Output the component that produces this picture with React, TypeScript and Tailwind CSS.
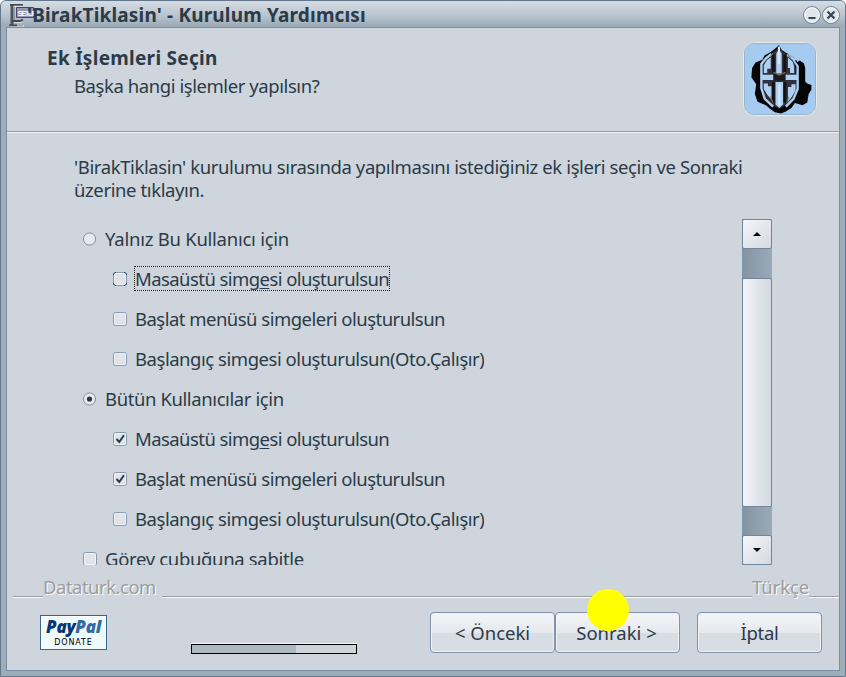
import type { ReactNode } from "react";

function AppIcon() {
  return (
    <svg width="26" height="24" viewBox="0 0 26 24" className="shrink-0" aria-hidden="true">
      <path d="M1.5 1h2.8v20H1.5z" fill="#50545c" />
      <path d="M4.3 3h1.4v17H4.3z" fill="#80868f" />
      <path d="M1 .9h13M4 17h7l3-1.5M0 21.4h8" stroke="#44474e" strokeWidth="1.8" fill="none" />
      <path d="M5 2.4h8M5 18.6h8M0 23h14l1-2" stroke="#dcdfe4" strokeWidth="1" fill="none" />
      <path d="M7.5 3.5h17v10h-17z" fill="#9597b4" stroke="#45466a" strokeWidth="1" />
      <text x="8.6" y="11.6" fontSize="8" fontWeight="700" letterSpacing="-1.8" fill="#f3f3f7" fontFamily="Liberation Sans, sans-serif">
        SETUP
      </text>
    </svg>
  );
}

function Emblem() {
  return (
    <svg width="74" height="74" viewBox="0 0 74 74" className="shrink-0" aria-hidden="true">
      <rect x="1" y="1" width="72" height="72" rx="10" fill="#a6cbf1" stroke="#8b96a3" strokeWidth="1" />
      <rect x="0.5" y="0.5" width="73" height="73" rx="11" fill="none" stroke="#ebebea" strokeWidth="1" />
      <g transform="translate(7 3) scale(.345 .35)">
        <path d="M84 0l8 14 16 10 18 12 10 14 8-6 12 8 4 14v38l6 6 12 4v14l-8 12-4 24-14 8-14-4-8-2-10 14-16 10-14 6-18-4-14-10-12-10-24-10-8-22 4-28-14-20 2-26 10-16 20-8 6-12 18-10 16-12z" fill="#050506" />
        <path d="M84 6l12 14 22 14 12 18 4 36v34l-8 28-18 20-24 12-22-12-16-20-12-30V52l12-18 22-14z" fill="#333137" />
        <path d="M76 24l8-12 8 12v58H76zM74 106h22v64l-11 10-11-10z" fill="#aed0f3" />
        <path d="M84 4v50M85 112v60" stroke="#d5e8f9" strokeWidth="6" fill="none" />
        <path d="M62 26L46 38 33 54v70l10 30 24 22M108 28l18 12 12 20v66l-12 28-22 22" stroke="#aed0f3" strokeWidth="7" fill="none" />
        <path d="M60 36v32H50v12H40V58l10-16zM110 36l14 12 4 14v18h-12V66h-6zM34 84h34v16H34zM102 84h36v16h-36zM40 110h12v8h10v38l-12-14-10-16zM110 120h10v-8h12v18l-12 20-10 12z" fill="#aed0f3" />
        <path d="M68 28v52M101 28v52M68 106v58M101 106v58" stroke="#121116" strokeWidth="8" fill="none" />
        <path d="M68 82h35v20H68z" fill="#1b1a1f" />
        <path d="M38 82h28M106 82h28M38 103h28M106 103h28" stroke="#30304e" strokeWidth="4" fill="none" />
        <path d="M68 78l17 8 18-8M58 34l8-10M110 28l8 10M60 146l6 18M112 148l-6 18" stroke="#77724f" strokeWidth="3" fill="none" />
        <path d="M26 56v72l10 28M132 44l14 18v66l-14 30" stroke="#08080a" strokeWidth="4" fill="none" />
      </g>
    </svg>
  );
}

function WindowButton({ kind }: { kind: "min" | "close" }) {
  return (
    <button className="h-[18px] w-[18px] shrink-0" aria-label={kind}>
      <svg width="18" height="18" viewBox="0 0 18 18">
        <circle cx="9" cy="9" r="8.4" fill="#e1e6eb" stroke="#66798d" />
        <circle cx="9" cy="9" r="7.3" fill="none" stroke="#fafbfc" />
        {kind === "min" ? (
          <path d="M5.5 12h7" stroke="#30475d" strokeWidth="2" />
        ) : (
          <path d="M5.5 5.5l7 7M12.5 5.5l-7 7" stroke="#30475d" strokeWidth="2.2" />
        )}
      </svg>
    </button>
  );
}

function CheckBox({ checked, focused }: { checked?: boolean; focused?: boolean }) {
  return (
    <svg width="14" height="14" viewBox="0 0 14 14" className="shrink-0">
      <rect x="0.5" y="0.5" width="13" height="13" rx="2" fill="#e0e4ea" stroke="#8799aa" />
      <rect x="1.5" y="1.5" width="11" height="11" rx="1" fill="none" stroke="#f0f2f5" />
      {focused && <path d="M.5 3V2L2 .5h1M11 .5h1L13.5 2v1M.5 11v1L2 13.5h1M11 13.5h1l1.5-1.5v-1" stroke="#29404f" fill="none" />}
      {checked && <path d="M3.5 7l2.8 3 4.6-6.8" stroke="#263746" strokeWidth="2" fill="none" />}
    </svg>
  );
}

function Radio({ checked }: { checked?: boolean }) {
  return (
    <svg width="14" height="14" viewBox="0 0 14 14" className="shrink-0">
      <circle cx="6.5" cy="7" r="6.1" fill="#e6e9ee" stroke="#8193a5" />
      {checked && <circle cx="6.5" cy="7" r="2.6" fill="#263746" />}
    </svg>
  );
}

function Option({ control, indent, children }: { control: ReactNode; indent?: boolean; children: ReactNode }) {
  return (
    <label className={indent ? "flex h-10 shrink-0 items-center gap-[8px] pl-[38px]" : "flex h-10 shrink-0 items-center gap-[8px] pl-[8px]"}>
      {control}
      {children}
    </label>
  );
}

function ScrollButton({ down }: { down?: boolean }) {
  return (
    <button className="flex h-[30px] w-full shrink-0 items-center justify-center rounded-[2px] border border-[#71869a] bg-linear-to-br from-[#f5f6f9] to-[#d4d9e1]">
      <svg width="8" height="4" viewBox="0 0 8 4">
        <path d={down ? "M0 0h8L4 4z" : "M0 4h8L4 0z"} fill="#000" />
      </svg>
    </button>
  );
}

function PushButton({ className, children }: { className: string; children: ReactNode }) {
  return (
    <button className={`flex h-[41px] w-[125px] items-center justify-center rounded-[4px] border border-[#8193a5] bg-linear-to-b from-[#f4f5f8] from-0% via-[#e5e8ee] via-50% to-[#d8dde4] to-51% shadow-[inset_0_0_0_1px_#f0f2f5] ${className}`}>
      {children}
    </button>
  );
}

export default function App() {
  return (
    <div className="flex h-[677px] w-[846px] flex-col overflow-hidden rounded-t-[6px] border border-[#63788d] bg-[#9fadba] px-[5px] pb-[5px] font-['Noto_Sans',sans-serif] text-[18.5px] leading-[24px] whitespace-nowrap text-[#2b3b47]">
      <header className="-mx-[5px] flex h-[26px] shrink-0 items-start bg-linear-to-b from-[#d6dce3] via-[#bdc7d0] to-[#9aa9b6] pr-[5px] pl-[8px]">
        <div className="pt-[3px]">
          <AppIcon />
        </div>
        <h1 className="-ml-[8px] pt-[2px] text-[19px] font-bold tracking-[0.16px]">'BirakTiklasin' - Kurulum Yardımcısı</h1>
        <div className="ml-auto flex gap-[1px] pt-[5px]">
          <WindowButton kind="min" />
          <WindowButton kind="close" />
        </div>
      </header>
      <main className="flex flex-1 flex-col border border-[#788ea3] bg-[#ced5dd]">
        <section className="flex h-[104px] shrink-0 justify-between border-b border-[#8fa1b2] pr-[22px] pl-[40px]">
          <div className="pt-[18px]">
            <h2 className="text-[19px] font-bold tracking-[0.28px]">Ek İşlemleri Seçin</h2>
            <p className="pt-[4px] pl-[27px] tracking-[-0.43px]">Başka hangi işlemler yapılsın?</p>
          </div>
          <div className="pt-[14px]">
            <Emblem />
          </div>
        </section>
        <section className="flex h-[445px] shrink-0 flex-col border-t border-[#edf0f3]">
          <div className="pt-[22px] pl-[67px] leading-[23px] tracking-[-0.39px]">
            <p>'BirakTiklasin' kurulumu sırasında yapılmasını istediğiniz ek işleri seçin ve Sonraki</p>
            <p>üzerine tıklayın.</p>
          </div>
          <div className="mt-[18px] flex h-[346px] shrink-0 justify-between pr-[67px] pl-[68px]">
            <div className="flex flex-col overflow-hidden">
              <Option control={<Radio />}>
                <span className="tracking-[-0.25px]">Yalnız Bu Kullanıcı için</span>
              </Option>
              <Option indent control={<CheckBox focused />}>
                <span className="mb-px -ml-px h-[25px] border border-dotted border-[#1c1c14] leading-[23px] tracking-[-0.57px]">
                  Masaüstü simg<u className="underline-offset-2">e</u>si oluşturulsun
                </span>
              </Option>
              <Option indent control={<CheckBox />}>
                <span className="tracking-[-0.52px]">Başlat menüsü simgeleri oluşturulsun</span>
              </Option>
              <Option indent control={<CheckBox />}>
                <span className="tracking-[-0.46px]">Başlangıç simgesi oluşturulsun(Oto.Çalışır)</span>
              </Option>
              <Option control={<Radio checked />}>
                <span className="tracking-[-0.4px]">Bütün Kullanıcılar için</span>
              </Option>
              <Option indent control={<CheckBox checked />}>
                <span className="tracking-[-0.57px]">
                  Masaüstü simg<u className="underline-offset-2">e</u>si oluşturulsun
                </span>
              </Option>
              <Option indent control={<CheckBox checked />}>
                <span className="tracking-[-0.52px]">Başlat menüsü simgeleri oluşturulsun</span>
              </Option>
              <Option indent control={<CheckBox />}>
                <span className="tracking-[-0.46px]">Başlangıç simgesi oluşturulsun(Oto.Çalışır)</span>
              </Option>
              <Option control={<CheckBox />}>
                <span className="tracking-[-0.33px]">Görev çubuğuna sabitle</span>
              </Option>
            </div>
            <div className="flex w-[30px] flex-col bg-linear-to-r from-[#8293a3] to-[#9baab8]">
              <ScrollButton />
              <div className="mt-[29px] h-[229px] w-full rounded-[2px] border border-[#71869a] bg-linear-to-r from-[#f1f3f7] to-[#d3d9e1]" />
              <div className="mt-auto">
                <ScrollButton down />
              </div>
            </div>
          </div>
        </section>
        <footer className="flex flex-1 flex-col">
          <div className="flex h-[21px] shrink-0 items-end pl-[6px] text-[#9c9d9e] [text-shadow:1px_1px_0_#fff]">
            <i className="h-[2px] w-[30px] border-t border-[#999da1] bg-white" />
            <span className="w-[119px] leading-[22px] tracking-[-0.5px]">Dataturk.com</span>
            <i className="h-[2px] flex-1 border-t border-[#999da1] bg-white" />
            <span className="w-[57px] leading-[22px] tracking-[-0.1px]">Türkçe</span>
            <i className="h-[2px] w-[30px] border-t border-[#999da1] bg-white" />
          </div>
          <div className="flex items-start pr-[17px] pl-[33px]">
            <div className="mt-[17px] flex h-[35px] w-[67px] flex-col items-center border border-[#39658f] bg-[#effafd] shadow-[inset_1px_1px_0_#fff]">
              <b className="pt-[2px] font-['Open_Sans',sans-serif] text-[17px] leading-[17px] font-extrabold tracking-[-0.3px] text-[#073873] italic">
                Pay<span className="text-[#33699f]">Pal</span>
              </b>
              <span className="pt-[3px] font-['DejaVu_Sans',sans-serif] text-[8px] leading-[10px] font-medium tracking-[0.9px] text-black">DONATE</span>
            </div>
            <div className="mt-[46px] ml-[84px] h-[10px] w-[166px] border border-black bg-[#cdd4dc] shadow-[0_-1px_0_#f5f6f7]">
              <div className="h-full w-[104px] bg-[#adb9c3]" />
            </div>
            <div className="relative mt-[14px] ml-auto flex">
              <PushButton className="">&lt; Önceki</PushButton>
              <PushButton className="pr-[2px]">Sonraki &gt;</PushButton>
              <i className="absolute -top-[23px] left-[157px] h-[42px] w-[42px] rounded-full bg-[#ffff00]" />
              <PushButton className="ml-[17px] tracking-[-0.3px]">İptal</PushButton>
            </div>
          </div>
        </footer>
      </main>
    </div>
  );
}
